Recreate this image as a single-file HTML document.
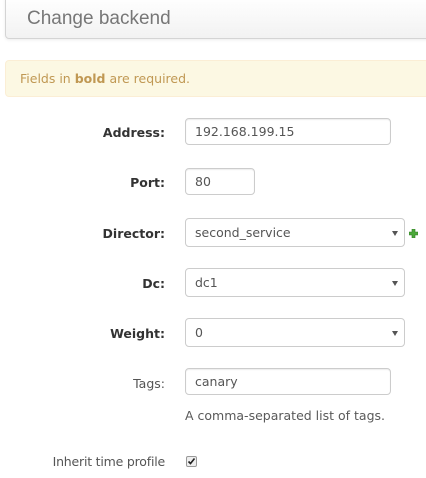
<!DOCTYPE html>
<html><head><style>
body{margin:0;width:426px;height:478px;overflow:hidden;background:#fff;font-family:"DejaVu Sans",sans-serif;font-size:12.5px;color:#333;position:relative}
.hdr{position:absolute;left:5px;top:-4px;width:440px;height:43px;border:1px solid #d4d4d4;border-radius:4px;background:linear-gradient(#fff,#f2f2f2);box-shadow:0 1px 3px rgba(0,0,0,.08);box-sizing:border-box;font-family:"Liberation Sans",sans-serif}
.hdr span{position:absolute;left:21px;top:11px;font-size:19px;color:#777}
.alert{position:absolute;left:5px;top:60px;width:440px;height:37px;box-sizing:border-box;background:#fcf8e3;border:1px solid #fbeed5;border-radius:4px;color:#c09853;padding:10px 0 0 14px}
.lbl{position:absolute;right:261px;font-weight:bold;text-align:right;white-space:nowrap}
.in{position:absolute;left:185px;box-sizing:border-box;border:1px solid #ccc;border-radius:4px;height:27px;padding:5px 0 0 9px;color:#555;box-shadow:inset 0 1px 1px rgba(0,0,0,.075)}
.sel{height:29px;width:220px;padding-top:6px;box-shadow:none}
.sel:after{content:"";position:absolute;right:6px;top:12px;border-left:3px solid transparent;border-right:3px solid transparent;border-top:5px solid #555}
</style></head><body>
<div class="hdr"><span>Change backend</span></div>
<div class="alert">Fields in <b>bold</b> are required.</div>

<div class="lbl" style="top:125px">Address:</div>
<div class="in" style="top:118px;width:206px">192.168.199.15</div>

<div class="lbl" style="top:175px">Port:</div>
<div class="in" style="top:168px;width:70px">80</div>

<div class="lbl" style="top:226px">Director:</div>
<div class="in sel" style="top:218px">second_service</div>
<svg style="position:absolute;left:409px;top:229px" width="9" height="9" viewBox="0 0 9 9"><path d="M3 0h3v3h3v3H6v3H3V6H0V3h3z" fill="#4ca83b" stroke="#2e7a22" stroke-width=".6"/></svg>

<div class="lbl" style="top:276px">Dc:</div>
<div class="in sel" style="top:268px">dc1</div>

<div class="lbl" style="top:326px">Weight:</div>
<div class="in sel" style="top:318px">0</div>

<div class="lbl" style="top:376px;font-weight:normal;color:#555">Tags:</div>
<div class="in" style="top:368px;width:206px">canary</div>
<div style="position:absolute;left:185px;top:408px;color:#595959">A comma-separated list of tags.</div>

<div class="lbl" style="top:454px;font-weight:normal;color:#555;letter-spacing:-0.2px">Inherit time profile</div>
<div style="position:absolute;left:186px;top:456px;width:9px;height:9px;border:1px solid #999;border-radius:2px;background:#eee"><svg width="9" height="9" viewBox="0 0 9 9" style="position:absolute;left:0;top:0"><path d="M1.5 4.5l2 2 4-5" fill="none" stroke="#222" stroke-width="1.6"/></svg></div>
</body></html>
